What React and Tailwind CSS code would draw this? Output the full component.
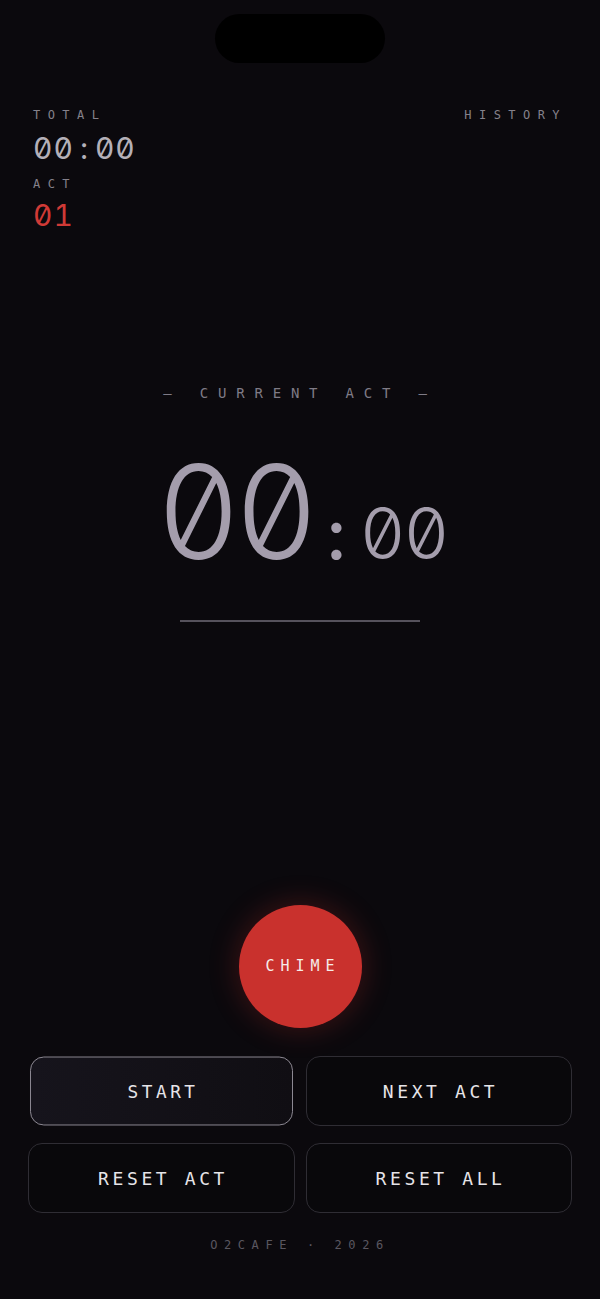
import { useState } from "react";

const mono = { fontFamily: '"DejaVu Sans Mono", "Liberation Mono", monospace' };
// digits use Inter with tabular + slashed zero, closest to the reference's 0
const digits = {
  fontFamily: 'Inter, "DejaVu Sans Mono", monospace',
  fontVariantNumeric: "tabular-nums slashed-zero",
  fontFeatureSettings: '"tnum" 1, "zero" 1',
};

function pad(n) {
  return String(n).padStart(2, "0");
}

export default function App() {
  const [running, setRunning] = useState(false);
  const [act, setAct] = useState(1);
  const [seconds, setSeconds] = useState(0);
  const [total, setTotal] = useState(0);

  const resetAct = () => setSeconds(0);
  const resetAll = () => {
    setSeconds(0);
    setTotal(0);
    setAct(1);
    setRunning(false);
  };

  return (
    <div
      className="w-full h-[1299px] bg-[#0b090d] text-[#e6e4e8] flex flex-col overflow-hidden"
      style={mono}
    >
      {/* Dynamic island */}
      <div className="flex justify-center pt-[14px]">
        <div className="w-[170px] h-[49px] rounded-full bg-black" />
      </div>

      {/* Header */}
      <div className="flex justify-between pl-[33px] pr-[33px] mt-[46px]">
        <div className="flex flex-col">
          <span className="text-[12px] leading-none tracking-[0.62em] text-[#85818b]">
            TOTAL
          </span>
          <span
            className="mt-[12px] flex items-baseline text-[30px] leading-none font-normal tracking-[1px] text-[#b4b0b8]"
            style={digits}
          >
            {pad(Math.floor(total / 60))}
            <span className="w-[21px] text-center">:</span>
            {pad(total % 60)}
          </span>
          <span className="mt-[15px] text-[12px] leading-none tracking-[0.62em] text-[#85818b]">
            ACT
          </span>
          <span
            className="mt-[10px] text-[30px] leading-none font-normal tracking-[1px] text-[#d03a36]"
            style={digits}
          >
            {pad(act)}
          </span>
        </div>
        <button className="self-start text-[12px] leading-none tracking-[0.62em] text-[#85818b]">
          HISTORY
        </button>
      </div>

      {/* Current act */}
      <div className="flex flex-col items-center mt-[156px]">
        <span className="text-[14px] leading-none tracking-[0.7em] text-[#7f7b86]">
          — CURRENT ACT —
        </span>
        <div
          className="mt-[47px] flex items-baseline text-[#a49dac] font-[350] pl-[4px]"
          style={digits}
        >
          <span className="text-[130px] leading-none tracking-[-6px]">
            {pad(Math.floor(seconds / 60))}
          </span>
          <span className="text-[71px] leading-none w-[47px] text-center font-medium">:</span>
          <span className="text-[71px] leading-none tracking-[-2px]">
            {pad(seconds % 60)}
          </span>
        </div>
        <div className="mt-[43px] w-[240px] h-[2px] bg-[#56525c]" />
      </div>

      {/* Chime */}
      <div className="flex justify-center mt-[283px]">
        <button className="w-[123px] h-[123px] rounded-full bg-[#c9312d] shadow-[0_0_30px_rgba(200,48,44,0.3)] flex items-center justify-center">
          <span className="text-[15px] leading-none tracking-[0.4em] pl-[0.4em] text-[#f5ebe9]">
            CHIME
          </span>
        </button>
      </div>

      {/* Controls */}
      <div className="grid grid-cols-2 gap-x-[11px] gap-y-[17px] px-[28px] mt-[28px]">
        <button
          onClick={() => setRunning(!running)}
          className="h-[70px] rounded-[14px] border border-[#8e8a94] bg-gradient-to-r from-[#16141c] to-[#100e13] scale-[0.985] text-[18px] tracking-[0.2em] pl-[0.2em]"
        >
          {running ? "PAUSE" : "START"}
        </button>
        <button
          onClick={() => setAct(act + 1)}
          className="h-[70px] rounded-[14px] border border-[#2f2d34] bg-[#09080b] text-[18px] tracking-[0.2em] pl-[0.2em]"
        >
          NEXT ACT
        </button>
        <button
          onClick={resetAct}
          className="h-[70px] rounded-[14px] border border-[#2f2d34] bg-[#09080b] text-[18px] tracking-[0.2em] pl-[0.2em]"
        >
          RESET ACT
        </button>
        <button
          onClick={resetAll}
          className="h-[70px] rounded-[14px] border border-[#2f2d34] bg-[#09080b] text-[18px] tracking-[0.2em] pl-[0.2em]"
        >
          RESET ALL
        </button>
      </div>

      {/* Footer */}
      <div className="flex justify-center mt-[26px]">
        <span className="text-[12px] leading-none tracking-[0.55em] text-[#5a5760]">
          O2CAFE · 2026
        </span>
      </div>
    </div>
  );
}
